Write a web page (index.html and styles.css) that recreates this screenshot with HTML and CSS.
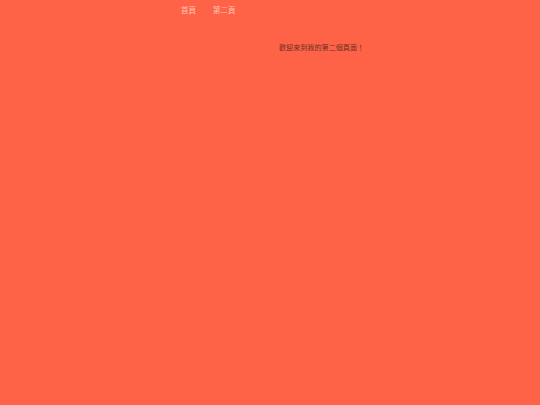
FILE: index.html
```html
<!DOCTYPE html>
<html lang="zh-Hant">
<head>
<meta charset="utf-8">
<title>第二頁</title>
<link rel="stylesheet" href="styles.css">
</head>
<body>
<nav class="nav">
  <a class="nav-link" href="#">首頁</a>
  <a class="nav-link" href="#">第二頁</a>
</nav>
<main class="main">
  <p class="welcome">歡迎來到我的第二個頁面！</p>
</main>
</body>
</html>
```
FILE: styles.css
```css
html, body {
  margin: 0;
  padding: 0;
  height: 100%;
}
body {
  background: #ff6347;
  font-family: "Noto Sans CJK TC", "Noto Sans CJK SC", sans-serif;
}
.nav {
  display: flex;
  gap: 17px;
  padding: 5px 0 0 181px;
  height: 15px;
}
.nav-link {
  color: #ffc4b6;
  text-decoration: none;
  font-size: 7.5px;
  line-height: 10px;
}
.main {
  padding: 22px 0 0 279px;
}
.welcome {
  margin: 0;
  font-size: 7.1px;
  line-height: 10px;
  color: #6a3024;
}
```
